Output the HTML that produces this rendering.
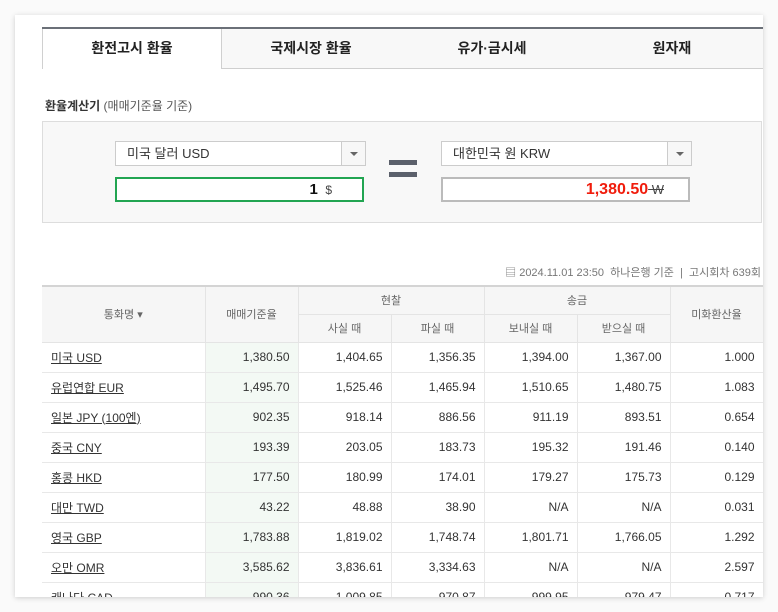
<!DOCTYPE html>
<html><head><meta charset="utf-8"><style>
*{margin:0;padding:0;box-sizing:border-box}
body{width:778px;height:612px;background:#fafafa;font-family:"Liberation Sans","Noto Sans CJK KR",sans-serif;overflow:hidden;position:relative;color:#333}
.card{position:absolute;left:15px;top:15px;width:748px;height:582px;background:#fff;box-shadow:0 1px 5px rgba(0,0,0,.18);overflow:hidden}
.a{position:absolute}
.tabs{left:27px;top:12px;width:721px;height:42px;border-top:2px solid #6b7078}
.tab{position:absolute;top:0;height:40px;line-height:38px;text-align:center;font-size:14px;font-weight:bold;color:#222}
.t1{left:0;width:180px;border-left:1px solid #d0d0d0;border-right:1px solid #d0d0d0;background:#fff}
.t2{left:179px;width:542px;background:#f8f8f8;border-bottom:1px solid #cfcfcf}
.lbl{left:30px;top:82px;font-size:12px;font-weight:bold;color:#333}
.lbl span{font-weight:normal;color:#555}
.calc{left:27px;top:106px;width:720px;height:102px;background:#f8f8f8;border:1px solid #ddd}
.sel{position:absolute;width:251px;height:25px;border:1px solid #ccc;background:#fff;font-size:13px;line-height:23px;padding-left:11px;color:#333}
.sel i{position:absolute;right:0;top:0;width:24px;height:23px;border-left:1px solid #ccc;background:#f7f7f7}
.sel i:after{content:"";position:absolute;left:8px;top:10px;border:4px solid transparent;border-top:4px solid #666;border-bottom:0}
.inp{position:absolute;width:249px;height:25px;background:#fff;text-align:right;font-weight:bold;line-height:21px;white-space:nowrap}
.eq{position:absolute;width:28px;height:5px;background:#5b606b}
.info{top:249px;font-size:11px;color:#777;white-space:nowrap}
table{position:absolute;left:27px;top:270px;border-collapse:collapse;width:721px;font-size:12px;table-layout:fixed}
th{background:#f6f6f6;color:#666;font-weight:normal;font-size:11px;border:1px solid #e4e4e4;height:28px}
thead tr:first-child th{border-top:2px solid #d4d4d4}
td{height:30px;border:1px solid #e8e8e8;text-align:right;padding-right:8px;color:#333}
td:first-child{text-align:left;padding-left:9px;border-left:0}
td:first-child u{color:#333}
td:nth-child(2){background:#f3f9f4}
th:first-child{border-left:0}
</style></head><body>
<div class="card">
<div class="a tabs">
 <div class="tab t2"></div>
 <div class="tab t1">환전고시 환율</div>
 <div class="tab" style="left:179px;width:180px">국제시장 환율</div>
 <div class="tab" style="left:360px;width:180px">유가·금시세</div>
 <div class="tab" style="left:540px;width:180px">원자재</div>
</div>
<div class="a lbl">환율계산기 <span>(매매기준율 기준)</span></div>
<div class="a calc">
 <div class="sel" style="left:72px;top:19px">미국 달러 USD<i></i></div>
 <div class="inp" style="left:72px;top:55px;border:2px solid #22a552;padding-right:30px;font-size:15px;color:#111">1 <span style="font-size:12px;font-weight:normal;color:#444">&nbsp;$</span></div>
 <div class="eq" style="left:346px;top:38px"></div>
 <div class="eq" style="left:346px;top:50px"></div>
 <div class="sel" style="left:398px;top:19px">대한민국 원 KRW<i></i></div>
 <div class="inp" style="left:398px;top:55px;border:2px solid #bbb;padding-right:24px;font-size:16px;color:#f01c0c">1,380.50<span style="font-size:13px;font-weight:normal;color:#444;text-decoration:line-through">&nbsp;W</span></div>
</div>
<div class="a info" style="right:2px">▤ 2024.11.01 23:50 &nbsp;하나은행 기준 &nbsp;|&nbsp; 고시회차 639회</div>
<table>
<colgroup><col style="width:163px"><col style="width:93px"><col style="width:93px"><col style="width:93px"><col style="width:93px"><col style="width:93px"><col style="width:93px"></colgroup>
<thead>
<tr><th rowspan="2">통화명 ▾</th><th rowspan="2">매매기준율</th><th colspan="2">현찰</th><th colspan="2">송금</th><th rowspan="2">미화환산율</th></tr>
<tr><th>사실 때</th><th>파실 때</th><th>보내실 때</th><th>받으실 때</th></tr>
</thead>
<tbody>
<tr><td><u>미국 USD</u></td><td>1,380.50</td><td>1,404.65</td><td>1,356.35</td><td>1,394.00</td><td>1,367.00</td><td>1.000</td></tr>
<tr><td><u>유럽연합 EUR</u></td><td>1,495.70</td><td>1,525.46</td><td>1,465.94</td><td>1,510.65</td><td>1,480.75</td><td>1.083</td></tr>
<tr><td><u>일본 JPY (100엔)</u></td><td>902.35</td><td>918.14</td><td>886.56</td><td>911.19</td><td>893.51</td><td>0.654</td></tr>
<tr><td><u>중국 CNY</u></td><td>193.39</td><td>203.05</td><td>183.73</td><td>195.32</td><td>191.46</td><td>0.140</td></tr>
<tr><td><u>홍콩 HKD</u></td><td>177.50</td><td>180.99</td><td>174.01</td><td>179.27</td><td>175.73</td><td>0.129</td></tr>
<tr><td><u>대만 TWD</u></td><td>43.22</td><td>48.88</td><td>38.90</td><td>N/A</td><td>N/A</td><td>0.031</td></tr>
<tr><td><u>영국 GBP</u></td><td>1,783.88</td><td>1,819.02</td><td>1,748.74</td><td>1,801.71</td><td>1,766.05</td><td>1.292</td></tr>
<tr><td><u>오만 OMR</u></td><td>3,585.62</td><td>3,836.61</td><td>3,334.63</td><td>N/A</td><td>N/A</td><td>2.597</td></tr>
<tr><td><u>캐나다 CAD</u></td><td>990.36</td><td>1,009.85</td><td>970.87</td><td>999.95</td><td>979.47</td><td>0.717</td></tr>
</tbody>
</table>
</div>
</body></html>
